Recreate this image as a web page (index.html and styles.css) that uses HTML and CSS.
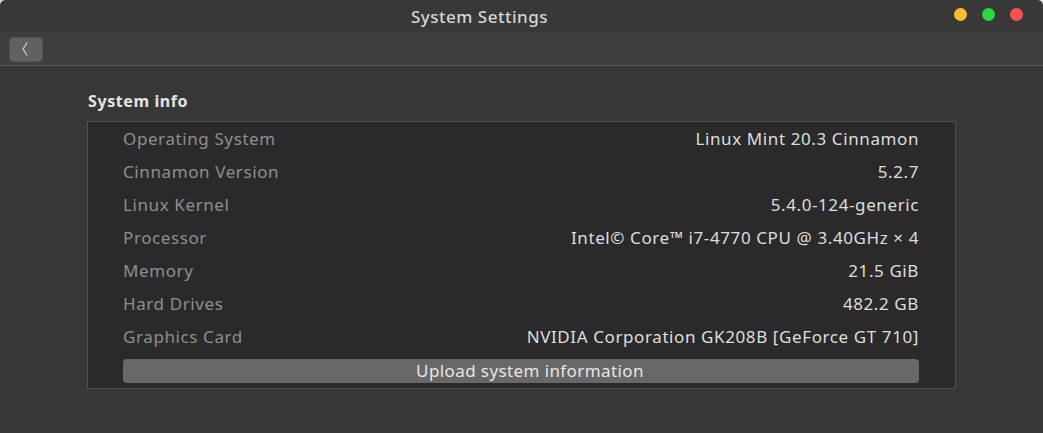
FILE: index.html
```html
<!DOCTYPE html>
<html>
<head>
<meta charset="utf-8">
<title>System Settings</title>
<link rel="stylesheet" href="styles.css">
</head>
<body>
<div class="window">
  <header class="titlebar">
    <div class="title">System Settings</div>
    <div class="controls">
      <span class="dot yellow"></span>
      <span class="dot green"></span>
      <span class="dot red"></span>
    </div>
  </header>
  <div class="toolbar">
    <button class="back" aria-label="Back">
      <svg width="8" height="16" viewBox="0 0 8 16"><path d="M6 1.5 Q4 5 2 8 Q4 11 6 14.5" fill="none" stroke="#d8d8d8" stroke-width="1.1"/></svg>
    </button>
  </div>
  <main class="content">
    <h2 class="section-title">System info</h2>
    <div class="box">
      <div class="row"><span class="label">Operating System</span><span class="value">Linux Mint 20.3 Cinnamon</span></div>
      <div class="row"><span class="label">Cinnamon Version</span><span class="value">5.2.7</span></div>
      <div class="row"><span class="label">Linux Kernel</span><span class="value">5.4.0-124-generic</span></div>
      <div class="row"><span class="label">Processor</span><span class="value">Intel© Core™ i7-4770 CPU @ 3.40GHz × 4</span></div>
      <div class="row"><span class="label">Memory</span><span class="value">21.5 GiB</span></div>
      <div class="row"><span class="label">Hard Drives</span><span class="value">482.2 GB</span></div>
      <div class="row"><span class="label">Graphics Card</span><span class="value">NVIDIA Corporation GK208B [GeForce GT 710]</span></div>
      <button class="upload">Upload system information</button>
    </div>
  </main>
</div>
</body>
</html>
```
FILE: styles.css
```css
*, *::before, *::after {
  box-sizing: border-box;
}
html, body {
  margin: 0;
  padding: 0;
  background: #d9d9d9;
}
body {
  font-family: "Noto Sans", "Open Sans", sans-serif;
  width: 1043px;
  height: 433px;
  overflow: hidden;
}
.window {
  width: 1043px;
  height: 433px;
  background: #373737;
  border-radius: 6px 6px 0 0;
  overflow: hidden;
  display: flex;
  flex-direction: column;
}
.titlebar {
  height: 32px;
  flex: none;
  background: #383838;
  position: relative;
  display: flex;
  align-items: center;
  justify-content: center;
}
.title {
  color: #d6d6d6;
  font-size: 17px;
  font-weight: 500;
  letter-spacing: 0.5px;
  margin-left: -84px;
  padding-top: 1px;
}
.controls {
  position: absolute;
  right: 20px;
  top: 8px;
  display: flex;
  gap: 15px;
}
.dot {
  width: 13px;
  height: 13px;
  border-radius: 50%;
  display: block;
}
.yellow { background: #fdbd33; }
.green { background: #2ad941; }
.red { background: #fc5052; }
.toolbar {
  height: 34px;
  flex: none;
  background: #3d3e40;
  border-bottom: 1px solid #565656;
  display: flex;
  align-items: center;
  padding-left: 9px;
}
.back {
  width: 34px;
  height: 25px;
  margin-top: 1px;
  background: #606162;
  border: 1px solid #525354;
  border-radius: 4px;
  padding: 0 2px 0 0;
  display: flex;
  align-items: center;
  justify-content: center;
}
.content {
  padding: 24px 0 0 87px;
}
.section-title {
  margin: 0 0 9px 1px;
  color: #e4e4e4;
  font-size: 16px;
  font-weight: 700;
  letter-spacing: 0.6px;
  line-height: 22px;
}
.box {
  width: 869px;
  height: 268px;
  background: #2a2a2a;
  border: 1px solid #4f4f4f;
  padding: 0 36px 0 35px;
  display: flex;
  flex-direction: column;
}
.row {
  height: 33px;
  flex: none;
  display: flex;
  justify-content: space-between;
  align-items: center;
  font-size: 17px;
  letter-spacing: 0.6px;
}
.label {
  color: #8e8e8e;
}
.value {
  color: #dedede;
}
.upload {
  margin-top: 6px;
  height: 24px;
  flex: none;
  background: #686868;
  border: none;
  border-radius: 4px;
  color: #e6e6e6;
  font-family: inherit;
  font-size: 17px;
  letter-spacing: 0.4px;
  padding: 0 0 0 18px;
  line-height: 24px;
}
```
